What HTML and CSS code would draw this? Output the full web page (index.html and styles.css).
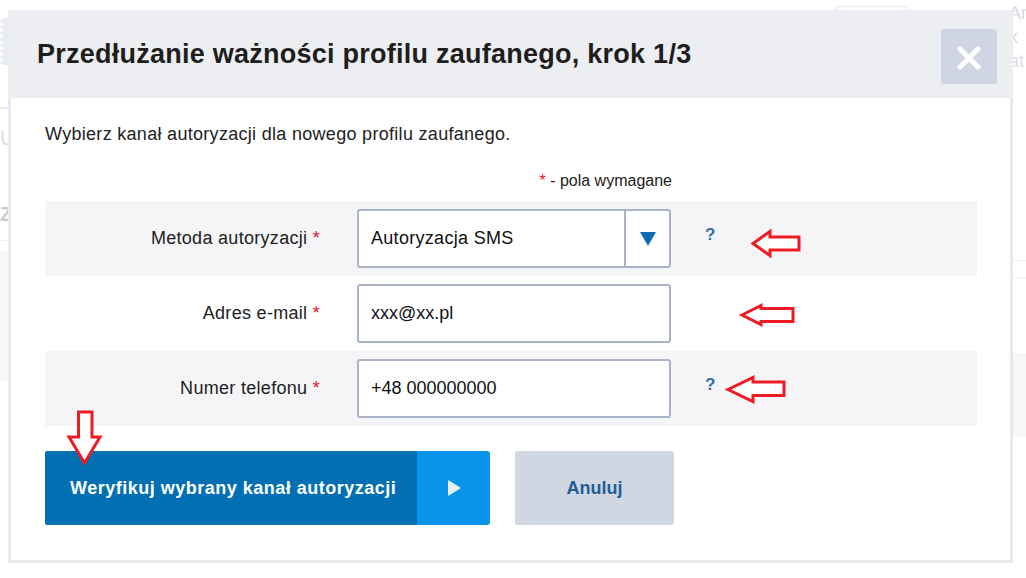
FILE: index.html
```html
<!DOCTYPE html>
<html lang="pl">
<head>
  <meta charset="UTF-8" />
  <meta name="viewport" content="width=device-width, initial-scale=1.0" />
  <title>Przedłużanie ważności profilu zaufanego</title>
  <link rel="stylesheet" href="styles.css">
</head>
<body>
  <!-- strona pod oknem, prawie niewidoczna -->
  <div class="page" aria-hidden="true">
    <aside class="page-left">
      <div class="page-menu"></div>
      <div class="page-rule page-rule-blue"></div>
      <div class="page-faint">U</div>
      <div class="page-faint page-faint-dark">Zy</div>
      <div class="page-rule"></div>
      <div class="page-panel"></div>
    </aside>
    <div class="page-main">
      <div class="page-search"></div>
    </div>
    <aside class="page-right">
      <div class="page-lines">
        <div class="page-faint">Ar</div>
        <div class="page-faint">k</div>
        <div class="page-faint">at</div>
      </div>
      <div class="page-rule page-rule-a"></div>
      <div class="page-rule page-rule-b"></div>
      <div class="page-panel page-panel-right"></div>
    </aside>
  </div>

  <div class="modal" role="dialog" aria-labelledby="modalTitle">
    <div class="modal-header">
      <h1 id="modalTitle">Przedłużanie ważności profilu zaufanego, krok 1/3</h1>
      <button class="close" type="button" aria-label="Zamknij">
        <svg width="24" height="24" viewBox="0 0 24 24">
          <path d="M3 3 L21 21 M21 3 L3 21" stroke="#fff" stroke-width="5" stroke-linecap="round" fill="none"/>
        </svg>
      </button>
    </div>

    <div class="modal-body">
      <p class="intro">Wybierz kanał autoryzacji dla nowego profilu zaufanego.</p>
      <p class="legend"><span class="req">*</span> - pola wymagane</p>

      <div class="form-row">
        <label class="form-label">Metoda autoryzacji <span class="req">*</span></label>
        <div class="select">
          <span class="select-value">Autoryzacja SMS</span>
          <span class="select-arrow"><i></i></span>
        </div>
        <span class="help">?</span>
      </div>

      <div class="form-row">
        <label class="form-label" for="email">Adres e-mail <span class="req">*</span></label>
        <input id="email" class="field" type="text" value="xxx@xx.pl" />
      </div>

      <div class="form-row">
        <label class="form-label" for="phone">Numer telefonu <span class="req">*</span></label>
        <input id="phone" class="field" type="text" value="+48 000000000" />
        <span class="help">?</span>
      </div>

      <div class="actions">
        <button class="btn-primary" type="button">
          <span class="btn-text">Weryfikuj wybrany kanał autoryzacji</span>
          <span class="btn-play"><i></i></span>
        </button>
        <button class="btn-cancel" type="button">Anuluj</button>
      </div>
    </div>

    <!-- czerwone strzałki z oznaczeniami -->
    <svg class="mark mark-1" width="50" height="28">
      <polygon points="2,13.5 19,1.5 19,7 48,7 48,20 19,20 19,25.5" />
    </svg>
    <svg class="mark mark-2" width="56" height="23">
      <polygon points="2,11 21,1.5 21,4.5 53,4.5 53,17.5 21,17.5 21,20.5" />
    </svg>
    <svg class="mark mark-3" width="61" height="28">
      <polygon points="2,13.5 27,1.5 27,6 58,6 58,19.5 27,19.5 27,25.5" />
    </svg>
    <svg class="mark mark-down" width="35" height="56">
      <polygon points="11.5,2 25,2 25,27 33,27 17.5,53 2,27 11.5,27" />
    </svg>
  </div>
</body>
</html>
```

FILE: styles.css
```css
:root {
  --text-color: #222;
  --border-color: #aab3ca;
  --row-color: #f5f5f8;
  --header-color: #edeef2;
  --primary-color: #0170b3;
  --primary-light: #0895e9;
  --help-color: #2d6fae;
  --req-color: #e8101a;
  --font-family: 'Liberation Sans', Arial, sans-serif;
}

* {
  box-sizing: border-box;
}

body {
  margin: 0;
  width: 1026px;
  height: 578px;
  overflow: hidden;
  font-family: var(--font-family);
  color: var(--text-color);
  background-color: #fff;
}

/* strona w tle */
.page {
  display: grid;
  grid-template-columns: 40px 1fr 17px;
  height: 578px;
  color: #d8dbe2;
  font-size: 20px;
}

.page-left,
.page-right {
  overflow: hidden;
}

.page-faint {
  white-space: nowrap;
  line-height: 24px;
}

.page-faint-dark {
  color: #c9ccd3;
  font-weight: bold;
  margin-top: 52px;
}

.page-menu {
  margin-top: 18px;
  height: 47px;
  border-radius: 4px;
  background-color: #e9ecf2;
  border-left: 3px dotted #fff;
}

.page-rule {
  height: 1px;
  background-color: #eef0f3;
  margin-top: 14px;
}

.page-rule-blue {
  height: 2px;
  margin-top: 42px;
  margin-bottom: 17px;
  background-color: #e0ebf7;
}

.page-panel {
  margin-top: 10px;
  height: 130px;
  background-color: #f7f7f9;
}

.page-main {
  display: flex;
  justify-content: flex-end;
  align-items: flex-start;
  padding-top: 6px;
}

.page-search {
  width: 71px;
  height: 30px;
  border: 1px solid #e6e8ec;
  margin-right: 102px;
}

.page-lines {
  padding-top: 1px;
  line-height: 25px;
  font-size: 18px;
}

.page-rule-a {
  margin-top: 187px;
}

.page-rule-b {
  margin-top: 16px;
}

.page-panel-right {
  margin-top: 75px;
  height: 84px;
}

/* okno */
.modal {
  position: fixed;
  left: 8px;
  top: 10px;
  width: 1005px;
  background-color: #fff;
}

.modal-header {
  height: 88px;
  display: flex;
  align-items: center;
  justify-content: space-between;
  padding: 0 16px 0 29px;
  background-color: var(--header-color);
}

.modal-header h1 {
  margin: 0;
  font-size: 27px;
  font-weight: bold;
  letter-spacing: 0.25px;
  color: #1e1e1e;
}

.close {
  width: 56px;
  height: 55px;
  margin-top: 5px;
  border: none;
  border-radius: 3px;
  background-color: #cfd5e2;
  display: flex;
  align-items: center;
  justify-content: center;
  padding: 0;
  cursor: pointer;
}

.close svg {
  margin-top: 3px;
}

.modal-body {
  border: 3px solid #e8e9ee;
  border-top: none;
  padding: 25px 33px 35px 34px;
  font-size: 18px;
  letter-spacing: 0.3px;
}

.intro {
  margin: 0;
  line-height: 22px;
}

.legend {
  margin: 26px 0 0;
  width: 627px;
  text-align: right;
  font-size: 16px;
  line-height: 20px;
  letter-spacing: 0;
}

.req {
  color: var(--req-color);
}

.form-row {
  display: flex;
  align-items: center;
  height: 75px;
}

.legend + .form-row {
  margin-top: 10px;
}

.form-row:nth-of-type(odd) {
  background-color: var(--row-color);
}

.form-label {
  width: 275px;
  margin-right: 37px;
  text-align: right;
}

.select,
.field {
  width: 314px;
  height: 59px;
  border: 2px solid var(--border-color);
  border-radius: 3px;
  background-color: #fff;
}

.field {
  padding: 0 12px;
  font: inherit;
  color: #111;
  outline: none;
}

.select {
  display: flex;
  color: #111;
}

.select-value {
  flex: 1;
  display: flex;
  align-items: center;
  padding: 0 12px;
}

.select-arrow {
  width: 45px;
  border-left: 2px solid var(--border-color);
  display: flex;
  align-items: center;
  justify-content: center;
}

.select-arrow i {
  width: 0;
  height: 0;
  border-left: 8.5px solid transparent;
  border-right: 8.5px solid transparent;
  border-top: 14px solid #0e6db4;
}

.help {
  margin-left: 34px;
  margin-bottom: 8px;
  font-size: 17px;
  font-weight: bold;
  color: var(--help-color);
}

.actions {
  display: flex;
  gap: 25px;
  margin-top: 25px;
}

.btn-primary,
.btn-cancel {
  height: 74px;
  border: none;
  border-radius: 3px;
  padding: 0;
  font: inherit;
  font-weight: bold;
  cursor: pointer;
}

.btn-primary {
  display: flex;
  overflow: hidden;
  color: #fff;
  letter-spacing: 0.5px;
  background-color: var(--primary-light);
}

.btn-text {
  width: 372px;
  display: flex;
  align-items: center;
  padding-left: 25px;
  white-space: nowrap;
  background-color: var(--primary-color);
}

.btn-play {
  width: 73px;
  display: flex;
  align-items: center;
  justify-content: center;
}

.btn-play i {
  width: 0;
  height: 0;
  border-top: 8px solid transparent;
  border-bottom: 8px solid transparent;
  border-left: 13px solid #e6f3ec;
  margin-left: 2px;
}

.btn-cancel {
  width: 159px;
  color: #1f5d97;
  background-color: #d0d6e2;
}

/* oznaczenia */
.mark {
  position: absolute;
  overflow: visible;
}

.mark polygon {
  fill: #fff;
  stroke: #ed1c24;
  stroke-width: 3;
}

.mark-1 {
  left: 743px;
  top: 220px;
}

.mark-2 {
  left: 732px;
  top: 294px;
}

.mark-3 {
  left: 718px;
  top: 366px;
}

.mark-down {
  left: 59px;
  top: 400px;
}
```
